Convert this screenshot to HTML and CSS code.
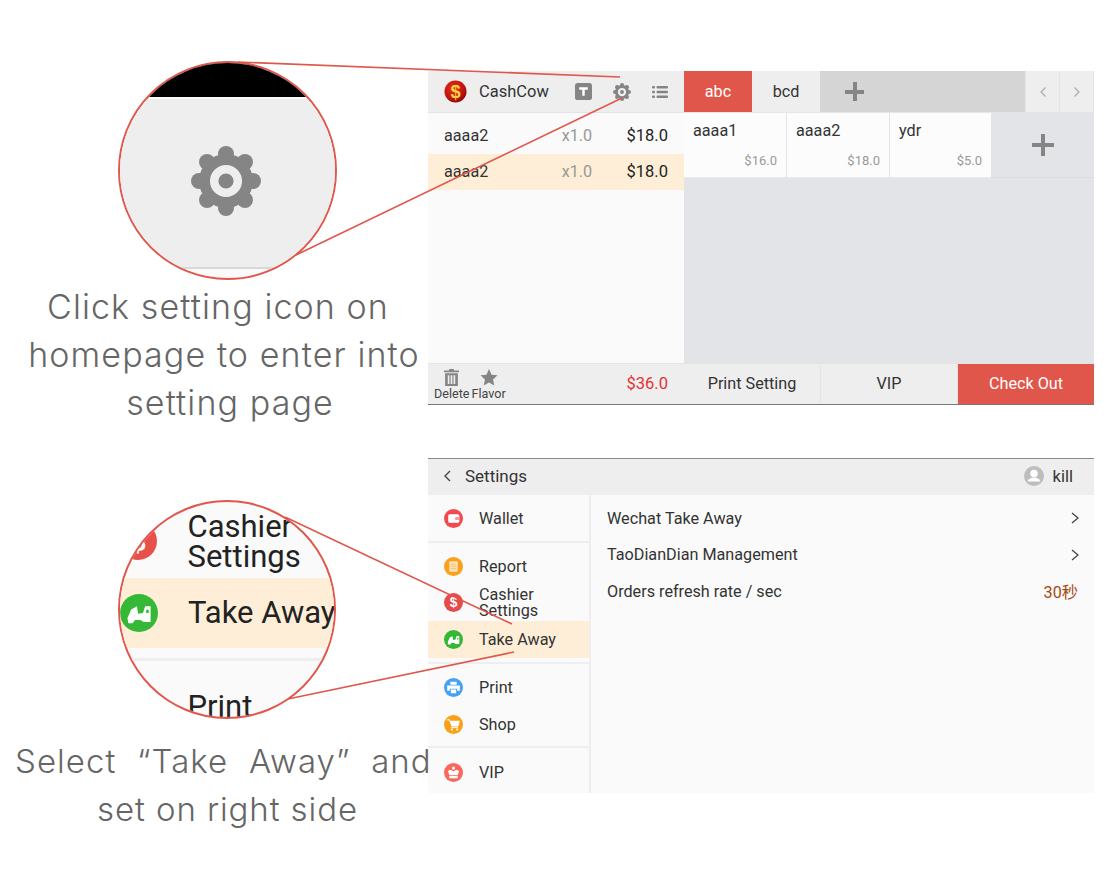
FILE: index.html
```html
<!DOCTYPE html>
<html lang="en">
<head>
<meta charset="utf-8">
<title>Take Away settings guide</title>
<link rel="stylesheet" href="styles.css">
</head>
<body>
<svg width="0" height="0" class="defs">
  <defs>
    <radialGradient id="coin" cx="0.4" cy="0.35" r="0.7">
      <stop offset="0" stop-color="#e2301a"/>
      <stop offset="0.7" stop-color="#c01212"/>
      <stop offset="1" stop-color="#7d0808"/>
    </radialGradient>
  </defs>
  <symbol id="gear" viewBox="-24 -24 48 48">
    <g fill="currentColor">
      <circle r="18.500"/>
      <circle cx="0" cy="-18.500" r="5.500"/><circle cx="0" cy="18.500" r="5.500"/>
      <circle cx="-18.500" cy="0" r="5.500"/><circle cx="18.500" cy="0" r="5.500"/>
      <circle cx="-13" cy="-13" r="5.500"/><circle cx="13" cy="-13" r="5.500"/>
      <circle cx="-13" cy="13" r="5.500"/><circle cx="13" cy="13" r="5.500"/>
    </g>
    <circle r="8.100" fill="none" stroke="#eee" stroke-width="5.800"/>
  </symbol>
  <symbol id="car" viewBox="0 0 18 18">
    <circle cx="9" cy="9" r="9" fill="#35b835"/>
    <path d="M3.500 11.500L5.300 7.300 8 5.800l.6 3.600 2.300-.4 1-3.200h2.600v7.500H11.200L9.700 12.300H7.100L6 13.800H4zM12.400 7.500v1.500h1.200V7.500z" fill="#fff" fill-rule="evenodd"/>
  </symbol>
</svg>

<svg class="callouts" viewBox="0 0 1120 887" width="1120" height="887" aria-hidden="true">
  <line x1="238" y1="62" x2="620" y2="77"/>
  <line x1="296" y1="255" x2="622" y2="98"/>
  <line x1="285" y1="517" x2="512" y2="624"/>
  <line x1="283" y1="700" x2="514" y2="652"/>
</svg>

<main class="page">
  <section class="step">
    <div class="note">
      <div class="lens lens-gear">
        <div class="lens-black"></div>
        <div class="lens-bar"><svg class="lens-gear-icon"><use href="#gear"/></svg></div>
        <div class="lens-foot"></div>
      </div>
      <p class="caption">
        <span class="line line-a">Click setting icon on</span>
        <span class="line line-b">homepage to enter into</span>
        <span class="line line-c">setting page</span>
      </p>
    </div>

    <div class="app app-home">
      <div class="left-pane">
        <header class="brandbar">
          <svg class="logo" viewBox="0 0 24 24">
            <circle cx="12" cy="12" r="11.500" fill="url(#coin)"/>
            <text x="12" y="18.600" text-anchor="middle" class="logo-text">$</text>
          </svg>
          <span class="brand">CashCow</span>
          <svg class="tool-t" viewBox="0 0 18 18">
            <rect width="18" height="18" rx="3" fill="#858585"/>
            <path d="M4.500 4.500h9v2.600h-3.200v6.400H7.700V7.100H4.500z" fill="#fff"/>
          </svg>
          <svg class="tool-gear"><use href="#gear"/></svg>
          <svg class="tool-list" viewBox="0 0 16 14">
            <g fill="#858585">
              <rect x="0" y="1" width="3" height="2.400" rx="1"/><rect x="4.500" y="1" width="11.500" height="2.400" rx="1"/>
              <rect x="0" y="5.800" width="3" height="2.400" rx="1"/><rect x="4.500" y="5.800" width="11.500" height="2.400" rx="1"/>
              <rect x="0" y="10.600" width="3" height="2.400" rx="1"/><rect x="4.500" y="10.600" width="11.500" height="2.400" rx="1"/>
            </g>
          </svg>
        </header>
        <div class="order">
          <div class="order-row"><span class="order-name">aaaa2</span><span class="order-qty">x1.0</span><span class="order-price">$18.0</span></div>
          <div class="order-row is-active"><span class="order-name">aaaa2</span><span class="order-qty">x1.0</span><span class="order-price">$18.0</span></div>
        </div>
        <footer class="order-foot">
          <div class="foot-action">
            <svg class="trash" viewBox="0 0 16 18">
              <path d="M5.500 0h5v1.500H16v1.800H0V1.500h5.500zM1.200 4.500h13.600V18H1.200zM4 6.500v9.500h1.800V6.500zM7.100 6.500v9.500h1.800V6.500zM10.200 6.500v9.500H12V6.500z" fill="#858585" fill-rule="evenodd"/>
            </svg>
            <span>Delete</span>
          </div>
          <div class="foot-action">
            <svg class="star" viewBox="0 0 18 18">
              <path d="M9 0l2.700 6 6.300.7-4.700 4.300 1.300 6.500L9 14.200l-5.600 3.300L4.700 11 0 6.700 6.300 6z" fill="#858585"/>
            </svg>
            <span>Flavor</span>
          </div>
          <span class="total">$36.0</span>
        </footer>
      </div>

      <div class="right-pane">
        <nav class="tabs">
          <span class="tab is-active">abc</span>
          <span class="tab">bcd</span>
          <span class="tab-add"><span class="plus plus-small"></span></span>
          <span class="pager"><svg class="pager-chev" viewBox="0 0 8 12"><path d="M6.500 1.500L2 6l4.500 4.500" fill="none" stroke="#aaa" stroke-width="1.200"/></svg></span>
          <span class="pager"><svg class="pager-chev" viewBox="0 0 8 12"><path d="M1.500 1.500L6 6l-4.500 4.500" fill="none" stroke="#aaa" stroke-width="1.200"/></svg></span>
        </nav>
        <div class="products">
          <div class="product"><span class="product-name">aaaa1</span><span class="product-price">$16.0</span></div>
          <div class="product"><span class="product-name">aaaa2</span><span class="product-price">$18.0</span></div>
          <div class="product"><span class="product-name">ydr</span><span class="product-price">$5.0</span></div>
          <div class="product-add"><span class="plus"></span></div>
        </div>
        <div class="actions">
          <span class="action">Print Setting</span>
          <span class="action">VIP</span>
          <span class="action action-primary">Check Out</span>
        </div>
      </div>
    </div>
  </section>

  <section class="step step-two">
    <div class="note">
      <div class="lens lens-menu">
        <div class="lens-cashier">
          <svg class="lens-dollar" viewBox="0 0 18 18"><circle cx="9" cy="9" r="9" fill="#e8504c"/><text x="9" y="13.500" text-anchor="middle" class="dollar-text">$</text></svg>
          <span>Cashier<br>Settings</span>
        </div>
        <div class="lens-take"><svg class="lens-car"><use href="#car"/></svg><span>Take Away</span></div>
        <div class="lens-rule"></div>
        <div class="lens-print">Print</div>
      </div>
      <p class="caption caption-two">
        <span class="line line-d">Select&nbsp; “Take&nbsp; Away”&nbsp; and</span>
        <span class="line line-e">set on right side</span>
      </p>
    </div>

    <div class="app app-settings">
      <header class="settings-bar">
        <svg class="chev-back" viewBox="0 0 8 12"><path d="M7 1L2 6l5 5" fill="none" stroke="#444" stroke-width="1.400"/></svg>
        <span class="settings-title">Settings</span>
        <svg class="avatar" viewBox="0 0 20 20">
          <circle cx="10" cy="10" r="10" fill="#bdbdbd"/>
          <circle cx="10" cy="7.500" r="3.800" fill="#fff"/>
          <path d="M3.500 15.500c1-3 3.500-4 6.500-4s5.500 1 6.500 4z" fill="#fff"/>
        </svg>
        <span class="user">kill</span>
      </header>
      <div class="settings-body">
        <aside class="menu">
          <div class="menu-group menu-group-first">
            <div class="menu-item">
              <svg class="menu-icon" viewBox="0 0 18 18"><circle cx="9" cy="9" r="9" fill="#f04a4e"/><rect x="4" y="5" width="10.500" height="8" rx="1.500" fill="#fff"/><rect x="10.500" y="7.500" width="4" height="3" rx="1" fill="#f59a9c"/></svg>
              <span>Wallet</span>
            </div>
          </div>
          <div class="menu-group">
            <div class="menu-item menu-item-report">
              <svg class="menu-icon" viewBox="0 0 18 18"><circle cx="9" cy="9" r="9" fill="#f9a11b"/><rect x="5" y="4" width="8" height="10" rx="1" fill="#fde3b8"/><path d="M6.500 7h5M6.500 9h5M6.500 11h5" stroke="#f6c77c" stroke-width="1"/></svg>
              <span>Report</span>
            </div>
            <div class="menu-item menu-item-wrap">
              <svg class="menu-icon" viewBox="0 0 18 18"><circle cx="9" cy="9" r="9" fill="#e44b4b"/><text x="9" y="13.500" text-anchor="middle" class="dollar-text">$</text></svg>
              <span>Cashier<br>Settings</span>
            </div>
            <div class="menu-item is-active">
              <svg class="menu-icon"><use href="#car"/></svg>
              <span>Take Away</span>
            </div>
          </div>
          <div class="menu-group menu-group-tools">
            <div class="menu-item">
              <svg class="menu-icon" viewBox="0 0 18 18"><circle cx="9" cy="9" r="9" fill="#46a1f5"/><path d="M6 3.500h6v2.800H6zM3 7h12v5h-2.500v-1.800h-7V12H3zM6.500 11h5v3.500h-5z" fill="#fff"/></svg>
              <span>Print</span>
            </div>
            <div class="menu-item">
              <svg class="menu-icon" viewBox="0 0 18 18"><circle cx="9" cy="9" r="9" fill="#fb9f16"/><path d="M3 4h2.400l.5 1.500h9L13.600 10.800H7.200L5 5.200H3z" fill="#fff"/><path d="M6.800 11.500h6.500v.9H6.800z" fill="#fff"/><circle cx="7.500" cy="13.800" r="1.100" fill="#fff"/><circle cx="12.500" cy="13.800" r="1.100" fill="#fff"/></svg>
              <span>Shop</span>
            </div>
          </div>
          <div class="menu-group menu-group-last">
            <div class="menu-item">
              <svg class="menu-icon" viewBox="0 0 18 18"><circle cx="9" cy="9" r="9" fill="#f9675f"/><circle cx="9" cy="4.800" r="1.500" fill="#fff"/><path d="M3.800 7.500c2-1.500 3.700-1 5.200.6 1.500-1.600 3.200-2.100 5.200-.6l-1.200 4H5z" fill="#fff"/><path d="M5 12.300h8v2.200H5z" fill="#fff"/></svg>
              <span>VIP</span>
            </div>
          </div>
        </aside>
        <div class="options">
          <div class="option"><span>Wechat Take Away</span><svg class="chev" viewBox="0 0 8 12"><path d="M1 1l6 5-6 5" fill="none" stroke="#444" stroke-width="1.300"/></svg></div>
          <div class="option"><span>TaoDianDian Management</span><svg class="chev" viewBox="0 0 8 12"><path d="M1 1l6 5-6 5" fill="none" stroke="#444" stroke-width="1.300"/></svg></div>
          <div class="option"><span>Orders refresh rate / sec</span><span class="option-value">30秒</span></div>
        </div>
      </div>
    </div>
  </section>
</main>
</body>
</html>
```

FILE: styles.css
```css
* { box-sizing: border-box; }

html, body {
  margin: 0;
  background: #fff;
}

body {
  position: relative;
  width: 1120px;
  height: 887px;
  overflow: hidden;
  font-family: Roboto, "Noto Sans CJK SC", sans-serif;
  font-size: 16.200px;
  color: #333;
}

.defs { position: absolute; }

.callouts {
  position: absolute;
  left: 0;
  top: 0;
  z-index: 5;
  pointer-events: none;
}

.callouts line {
  stroke: #e0574c;
  stroke-width: 1.600;
}

.page {
  display: grid;
  grid-template-columns: 428px 666px;
  row-gap: 31px;
  padding-top: 61px;
}

.step {
  display: contents;
}

.note {
  display: flex;
  flex-direction: column;
  align-items: flex-start;
}

.step-two .note { padding-top: 42px; }

.caption {
  position: relative;
  z-index: 6;
  margin: 3px 0 0;
  width: 100%;
  font-family: Inter, sans-serif;
  font-weight: 300;
  font-size: 34px;
  line-height: 48px;
  letter-spacing: 1.100px;
  color: #666;
  text-align: center;
  white-space: nowrap;
}

.caption-two { margin-top: 18px; font-size: 33px; }

.line { display: block; }
.line-a { padding-left: 8px; }
.line-b { padding-left: 20px; }
.line-c { padding-left: 32px; }
.line-d { padding-left: 15px; letter-spacing: 1.050px; }
.line-e { padding-left: 27px; letter-spacing: 0.900px; }

/* magnifier lenses */
.lens {
  position: relative;
  z-index: 6;
  flex: none;
  width: 219px;
  height: 219px;
  margin-left: 118px;
  border: 2.500px solid #e0574c;
  border-radius: 50%;
  overflow: hidden;
  background: #fafafa;
}

.lens-gear { display: flex; flex-direction: column; }

.lens-black { height: 34px; flex: none; background: #000; }

.lens-bar {
  flex: none;
  height: 170px;
  margin-top: 2px;
  display: flex;
  justify-content: center;
  padding-top: 47px;
  background: #eee;
  border-bottom: 2px solid #d8d8d8;
}

.lens-gear-icon {
  width: 70px;
  height: 70px;
  margin-right: 3px;
  color: #858585;
}

.lens-menu {
  width: 218px;
  font-size: 31px;
  line-height: 30px;
  color: #222;
}

.lens-cashier {
  display: flex;
  gap: 31px;
  height: 75.500px;
  padding-top: 10px;
}

.lens-dollar {
  flex: none;
  width: 38px;
  height: 38px;
  margin-top: 10px;
  margin-left: -1.500px;
}

.lens-take {
  display: flex;
  align-items: center;
  gap: 30px;
  height: 70px;
  background: #feeed7;
}

.lens-car { flex: none; width: 38px; height: 38px; }

.lens-take span { white-space: nowrap; }

.lens-rule {
  height: 3px;
  margin-top: 10px;
  background: #eee;
}

.lens-print {
  padding: 31px 0 0 67.500px;
}

/* app shared */
.app {
  display: flex;
  background: #fafafa;
}

.app-home {
  margin-top: 10px;
  height: 334px;
}

.app-settings {
  flex-direction: column;
  height: 335px;
}

/* home: left */
.left-pane {
  width: 256px;
  display: flex;
  flex-direction: column;
}

.brandbar {
  display: flex;
  align-items: center;
  height: 42px;
  padding-left: 16px;
  background: #eee;
  border-bottom: 1px solid #e4e4e4;
}

.logo { flex: none; width: 23px; height: 23px; }

.logo-text {
  font-family: "Liberation Sans", sans-serif;
  font-weight: 700;
  font-size: 19px;
  fill: #fbd23a;
}

.brand {
  width: 70px;
  margin-left: 12px;
  font-size: 16.500px;
  white-space: nowrap;
  color: #333;
}

.tool-t { flex: none; width: 17px; height: 17px; margin-left: 26px; }
.tool-gear { flex: none; width: 18px; height: 18px; margin-left: 21px; color: #858585; }
.tool-list { flex: none; width: 16px; height: 14px; margin-left: 21px; }

.order {
  flex: 1;
  padding-top: 5px;
}

.order-row {
  display: flex;
  align-items: center;
  height: 36px;
  padding: 0 16px 2px;
}

.order-row.is-active { background: #feeed7; }

.order-name { width: 118px; color: #333; }
.order-qty { width: 31px; margin-right: 34px; color: #999; white-space: nowrap; }
.order-price { margin-left: auto; font-size: 16.500px; color: #222; }

.order-foot {
  display: flex;
  align-items: flex-end;
  height: 42px;
  padding: 0 16px 4px 6px;
  background: #eee;
  border-top: 1px solid #e4e4e4;
  border-bottom: 1px solid #777;
}

.foot-action {
  display: flex;
  flex-direction: column;
  align-items: center;
  margin-right: 2px;
  font-size: 12.600px;
  line-height: 13px;
  color: #444;
}

.trash { width: 15px; height: 17px; margin-bottom: 1px; }
.star { width: 18px; height: 17px; margin-bottom: 1px; }

.total {
  align-self: center;
  margin: 3px 0 0 auto;
  font-size: 16.500px;
  color: #e53232;
}

/* home: right */
.right-pane {
  width: 410px;
  display: flex;
  flex-direction: column;
  background: #e3e4e8;
}

.tabs {
  display: flex;
  height: 42px;
  border-bottom: 1px solid #e6e6e6;
}

.tab {
  width: 68px;
  display: flex;
  align-items: center;
  justify-content: center;
  background: #eee;
  color: #333;
}

.tab.is-active { background: #e0564a; color: #fff; }

.tab-add {
  width: 205px;
  display: flex;
  align-items: center;
  padding-left: 25px;
  background: #d5d5d5;
}

.plus {
  display: block;
  width: 22px;
  height: 22px;
  background:
    linear-gradient(#858585, #858585) center / 100% 4px no-repeat,
    linear-gradient(#858585, #858585) center / 4px 100% no-repeat;
}

.plus-small { width: 19px; height: 19px; }

.pager {
  width: 33px;
  margin-left: 1px;
  display: flex;
  align-items: center;
  justify-content: center;
  background: #eee;
}

.pager-chev { width: 8px; height: 12px; }

.products {
  flex: 1;
  display: grid;
  grid-template-columns: 102px 102px 101px 102px;
  column-gap: 1px;
  align-items: start;
}

.product {
  height: 65px;
  display: flex;
  flex-direction: column;
  justify-content: space-between;
  padding: 8px 9px 9px 9px;
  background: #fcfcfc;
  border-bottom: 1px solid #eaeaea;
}

.product-price {
  align-self: flex-end;
  font-size: 13px;
  color: #999;
}

.product-add {
  height: 65px;
  display: flex;
  align-items: center;
  justify-content: center;
  border-bottom: 1px solid #dcdde0;
}

.actions {
  display: grid;
  grid-template-columns: 136px 136px 136px;
  column-gap: 1px;
  height: 42px;
  border-top: 1px solid #e4e4e4;
  border-bottom: 1px solid #777;
  background: #e4e4e4;
}

.action {
  display: flex;
  align-items: center;
  justify-content: center;
  padding-bottom: 2px;
  background: #eee;
}

.action-primary { background: #e0564a; color: #fff; }

/* settings */
.settings-bar {
  display: flex;
  align-items: center;
  height: 37px;
  padding: 0 21px 2px 15px;
  background: #eee;
  border-top: 1px solid #888;
  color: #333;
}

.chev-back { width: 8px; height: 12px; flex: none; }

.settings-title { margin-left: 14px; font-size: 17px; }

.avatar { width: 20px; height: 20px; margin-left: auto; flex: none; }

.user { margin-left: 9px; font-size: 16.500px; }

.settings-body { flex: 1; display: flex; min-height: 0; }

.menu {
  width: 163px;
  flex: none;
  border-right: 2px solid #eee;
  color: #333;
}

.menu-group {
  padding: 4px 0;
  border-bottom: 2px solid #eee;
}

.menu-group-first { padding-top: 5px; }
.menu-group-tools { padding: 5px 0 3px; }
.menu-group-last { padding-top: 6px; border-bottom: 0; }

.menu-item {
  display: flex;
  align-items: center;
  gap: 16px;
  height: 37px;
  padding-left: 16px;
}

.menu-item-report { padding-top: 1px; }

.menu-item-wrap { line-height: 16px; }

.menu-item.is-active { background: #feeed7; }

.menu-icon { flex: none; width: 19px; height: 19px; }

.dollar-text {
  font-family: "Liberation Sans", sans-serif;
  font-weight: 700;
  font-size: 13px;
  fill: #fff;
}

.options {
  flex: 1;
  padding: 5px 16px 0;
}

.option {
  display: flex;
  align-items: center;
  justify-content: space-between;
  height: 36.500px;
  color: #333;
}

.chev { width: 8px; height: 12px; flex: none; margin-right: -1px; }

.option-value { color: #a8480f; }
```
